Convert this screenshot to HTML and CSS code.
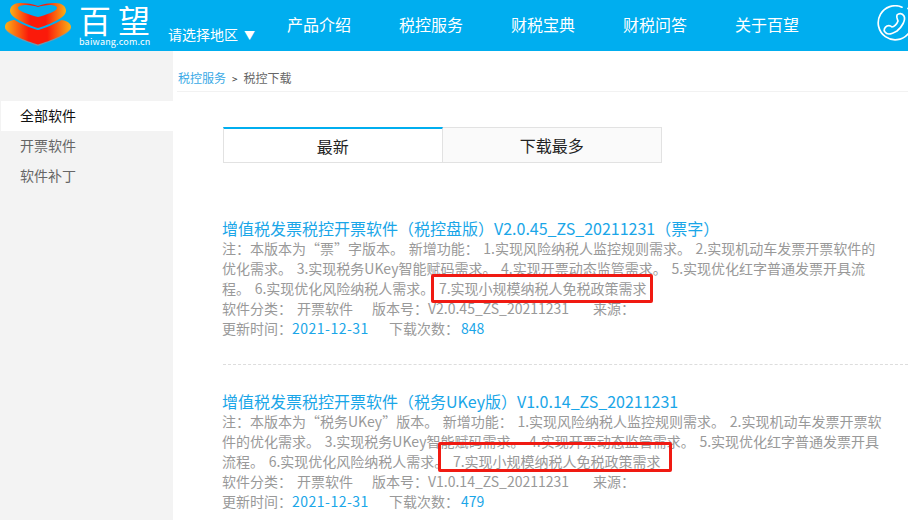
FILE: index.html
```html
<!DOCTYPE html>
<html lang="zh-CN">
<head>
<meta charset="utf-8">
<title>税控下载</title>
<link rel="stylesheet" href="styles.css">
</head>
<body>
<header class="header">
  <div class="brand">
    <svg class="logo" width="77" height="48" viewBox="0 0 77 48">
      <defs>
        <linearGradient id="lg" x1="0" x2="1" y1="0" y2="0">
          <stop offset="0" stop-color="#fbb116"/>
          <stop offset="0.36" stop-color="#fb1a0a"/>
          <stop offset="0.64" stop-color="#fb1a0a"/>
          <stop offset="1" stop-color="#fbb116"/>
        </linearGradient>
      </defs>
      <path d="M5 28C5 23 10 21 16 21C24 21 32 25 38 28C44 25 52 21 60 21C66 21 71 24 71 28C71 34 50 42 38 46C26 42 5 34 5 28Z" fill="#6a9ab0"/>
      <path d="M5 27C5 22 10 20 16 20C24 20 32 24 38 27C44 24 52 20 60 20C66 20 71 23 71 27C71 33 50 41 38 44.500C26 41 5 33 5 27Z" fill="url(#lg)"/>
      <path d="M10 11C10 6 14 3 20 3C27 3 33 4 38 6C43 4 49 3 55 3C62 3 66 6 66 11C66 18 48 25 38 28C28 25 10 18 10 11Z" fill="url(#lg)" stroke="#00aeef" stroke-width="4" paint-order="stroke"/>
      <path d="M18 8C18 6 22 5 26 5C31 5 35 6 38 7C41 6 45 5 50 5C54 5 57 6 57 8C57 11 46 15 38 17C30 15 18 11 18 8Z" fill="#00aeef"/>
    </svg>
    <div class="brand-text">
      <div class="brand-name">百望</div>
      <div class="brand-url">baiwang.com.cn</div>
    </div>
  </div>
  <div class="region">请选择地区<span class="caret">▼</span></div>
  <nav class="nav">
    <a class="nav-item">产品介绍</a>
    <a class="nav-item">税控服务</a>
    <a class="nav-item">财税宝典</a>
    <a class="nav-item">财税问答</a>
    <a class="nav-item">关于百望</a>
  </nav>
  <svg class="phone" width="38" height="38" viewBox="0 0 38 38" fill="none" stroke="#fff" stroke-width="1.7" stroke-linecap="round">
    <path d="M25 2.200A17 17 0 1 0 31 29"/>
    <path d="M31 3.500A17 17 0 0 1 35 18"/>
    <path d="M20 10C22 8 25 8 27 11C29 15 25 22 20 26C15 29 10 30 8 27C6 25 8 22 10 21C12 20 14 21 15 22C17 22 20 19 21 16C21 15 19 13 20 10Z"/>
  </svg>
</header>
<div class="page">
  <aside class="sidebar">
    <a class="side-item active">全部软件</a>
    <a class="side-item">开票软件</a>
    <a class="side-item">软件补丁</a>
  </aside>
  <main class="main">
    <div class="crumb"><a class="crumb-link">税控服务</a><span class="crumb-sep">&gt;</span><span>税控下载</span></div>
    <div class="content">
      <div class="tabs">
        <div class="tab tab-on">最新</div>
        <div class="tab">下载最多</div>
      </div>
      <article class="item item-first">
        <h3 class="title">增值税发票税控开票软件（税控盘版）V2.0.45_ZS_20211231（票字）</h3>
        <p class="desc">注：本版本为“票”字版本。 新增功能： 1.实现风险纳税人监控规则需求。 2.实现机动车发票开票软件的<br>优化需求。 3.实现税务UKey智能赋码需求。 4.实现开票动态监管需求。 5.实现优化红字普通发票开具流<br>程。 6.实现优化风险纳税人需求。 7.实现小规模纳税人免税政策需求</p>
        <div class="meta">
          <div>软件分类：<span class="gap-a">开票软件</span><span class="gap-b">版本号：V2.0.45_ZS_20211231</span><span class="gap-d">来源：</span></div>
          <div>更新时间：<span class="val date">2021-12-31</span><span class="gap-c">下载次数：<span class="val count">848</span></span></div>
        </div>
        <span class="mark mark-a"></span>
      </article>
      <article class="item">
        <h3 class="title">增值税发票税控开票软件（税务UKey版）V1.0.14_ZS_20211231</h3>
        <p class="desc">注：本版本为“税务UKey”版本。 新增功能： 1.实现风险纳税人监控规则需求。 2.实现机动车发票开票软<br>件的优化需求。 3.实现税务UKey智能赋码需求。 4.实现开票动态监管需求。 5.实现优化红字普通发票开具<br>流程。 6.实现优化风险纳税人需求。 7.实现小规模纳税人免税政策需求</p>
        <div class="meta">
          <div>软件分类：<span class="gap-a">开票软件</span><span class="gap-b">版本号：V1.0.14_ZS_20211231</span><span class="gap-d">来源：</span></div>
          <div>更新时间：<span class="val date">2021-12-31</span><span class="gap-c">下载次数：<span class="val count">479</span></span></div>
        </div>
        <span class="mark mark-b"></span>
      </article>
    </div>
  </main>
</div>
</body>
</html>
```
FILE: styles.css
```css
* { box-sizing: border-box; }
html, body { margin: 0; height: 100%; overflow: hidden; }
body {
  font-family: "Noto Sans CJK SC", "Noto Sans", sans-serif;
  font-size: 14px;
  color: #999;
  background: #fff;
}
.header {
  height: 51px;
  background: #00aeef;
  display: flex;
  color: #fff;
  overflow: hidden;
}
.brand { display: flex; width: 168px; flex: none; }
.logo { flex: none; }
.brand-text { margin-left: 2px; }
.brand-name {
  font-size: 32px;
  line-height: 34px;
  margin-top: 2px;
  letter-spacing: 7px;
  white-space: nowrap;
}
.brand-url { font-size: 9px; line-height: 11px; letter-spacing: .2px; white-space: nowrap; }
.region { width: 119px; flex: none; padding-top: 24px; font-size: 14px; line-height: 20px; white-space: nowrap; }
.caret { font-size: 11px; margin-left: 6px; }
.nav { display: flex; flex: none; }
.nav-item { width: 112px; font-size: 16px; line-height: 48px; white-space: nowrap; }
.phone { margin: 5px 0 0 30px; flex: none; }

.page { display: flex; height: 469px; }
.sidebar { width: 173px; flex: none; background: #f3f3f3; padding: 50px 0 0 1px; }
.side-item { display: block; height: 30px; line-height: 28px; padding-left: 19px; color: #666; }
.side-item.active { background: #fff; color: #111; }
.main { flex: 1; min-width: 0; padding-left: 4px; }
.crumb {
  height: 41px;
  padding: 16px 0 0 1px;
  border-bottom: 1px solid #f2f2f2;
  font-size: 12px;
  line-height: 22px;
  color: #666;
}
.crumb-link { color: #39a9e6; }
.crumb-sep { margin: 0 6px; color: #333; font-size: 10px; }
.content { padding: 35px 0 0 46px; }
.tabs { display: flex; width: 439px; }
.tab {
  width: 220px;
  height: 36px;
  background: #fafafa;
  border: 1px solid #e2e2e2;
  border-left: 0;
  font-size: 16px;
  line-height: 34px;
  text-align: center;
  color: #222;
}
.tab-on {
  background: #fff;
  border-left: 1px solid #e2e2e2;
  border-top: 2px solid #00aeef;
  width: 220px;
}
.item { position: relative; padding-bottom: 26px; border-bottom: 1px dashed #ddd; width: 685px; }
.item-first { margin-top: 55px; }
.item + .item { border-bottom: 0; padding-top: 24px; }
.title { margin: 2px 0 0 -1px; font-size: 16px; font-weight: 400; line-height: 20px; color: #1aa6e8; white-space: nowrap; }
.desc { margin: 0 0 0 -1px; line-height: 20px; white-space: nowrap; word-spacing: 1.5px; }
.meta { margin-left: -1px; line-height: 20px; white-space: nowrap; }
.gap-a { margin-left: 5px; }
.gap-b { margin-left: 19px; }
.gap-c { margin-left: 20px; }
.gap-d { margin-left: 24px; }
.val { color: #1aa6e8; }
.date { letter-spacing: .5px; }
.count { margin-left: 2px; }
.mark {
  position: absolute;
  border: 3px solid #f01a12;
  border-radius: 2px;
  pointer-events: none;
}
.mark-a { left: 208px; top: 56px; width: 222px; height: 29px; }
.mark-b { left: 215px; top: 77px; width: 234px; height: 30px; }
```
